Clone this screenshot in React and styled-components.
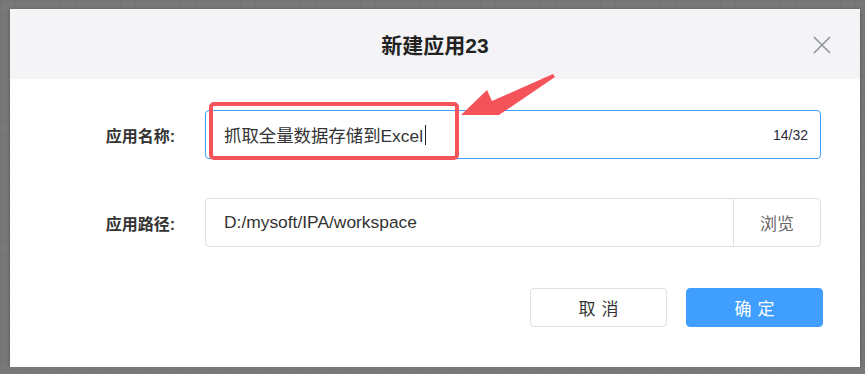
import React from 'react'
import styled, { createGlobalStyle } from 'styled-components'

const CJK = `"Liberation Sans", "Noto Sans CJK SC", sans-serif`

const GlobalStyle = createGlobalStyle`
  html, body {
    margin: 0;
    padding: 0;
    background-color: #787878;
    background-image:
      linear-gradient(rgba(0, 0, 0, 0.035) 1px, transparent 1px),
      linear-gradient(90deg, rgba(0, 0, 0, 0.035) 1px, transparent 1px);
    background-size: 15px 15px;
    font-family: ${CJK};
  }
`

const Page = styled.div`
  padding: 9px 0 0 10px;
`

const Dialog = styled.div`
  position: relative;
  width: 850px;
  height: 358px;
  background: #fff;
  box-shadow: 0 1px 3px rgba(0, 0, 0, 0.35);
  display: flex;
  flex-direction: column;
`

const Header = styled.div`
  height: 70px;
  background: #f4f4f6;
  display: flex;
  align-items: center;
  justify-content: center;
  position: relative;
`

const Title = styled.h2`
  margin: 0;
  font-size: 21px;
  font-weight: 700;
  color: #222;
  font-family: ${CJK};
`

const Close = styled.button`
  position: absolute;
  right: 29px;
  top: 27px;
  width: 18px;
  height: 18px;
  padding: 0;
  border: none;
  background: none;
  color: #8e9299;
  display: flex;
`

const Form = styled.div`
  padding: 31px 39px 0 0;
  display: flex;
  flex-direction: column;
  gap: 39px;
`

const Row = styled.div`
  display: grid;
  grid-template-columns: 195px 1fr;
  align-items: center;
`

const Label = styled.label`
  text-align: right;
  padding-right: 30px;
  font-size: 16px;
  font-weight: 700;
  color: #333;
`

const Field = styled.div`
  height: 49px;
  box-sizing: border-box;
  border: 1px solid ${p => (p.$focused ? '#409eff' : '#dcdfe6')};
  border-radius: 4px;
  display: flex;
  align-items: center;
  overflow: hidden;
`

const Value = styled.div`
  flex: 1;
  padding-left: 18px;
  font-size: 17.4px;
  color: #333;
  display: flex;
  align-items: center;
`

const Caret = styled.span`
  display: inline-block;
  width: 1px;
  height: 20px;
  background: #222;
  margin-left: 2px;
`

const Count = styled.span`
  font-size: 14px;
  color: #2a2a3a;
  padding-right: 12px;
`

const Append = styled.div`
  width: 86px;
  align-self: stretch;
  border-left: 1px solid #dcdfe6;
  display: flex;
  align-items: center;
  justify-content: center;
  font-size: 17px;
  color: #6a6a6a;
`

const Footer = styled.div`
  display: flex;
  justify-content: flex-end;
  gap: 19px;
  padding: 41px 37px 0 0;
`

const Button = styled.button`
  width: 137px;
  height: 39px;
  box-sizing: border-box;
  border-radius: 4px;
  border: 1px solid ${p => (p.$primary ? '#409eff' : '#dcdfe6')};
  background: ${p => (p.$primary ? '#409eff' : '#fff')};
  color: ${p => (p.$primary ? '#fff' : '#333')};
  font-family: ${CJK};
  font-size: 17px;
  letter-spacing: 6px;
  text-indent: 6px;
  cursor: pointer;
`

const Annotation = styled.svg`
  position: absolute;
  left: 0;
  top: 0;
  width: 850px;
  height: 358px;
  pointer-events: none;
`

const App = () => {
  return (
    <>
      <GlobalStyle />
      <Page>
        <Dialog>
          <Header>
            <Title>新建应用23</Title>
            <Close aria-label='close'>
              <svg width='18' height='18' viewBox='0 0 18 18'>
                <path d='M1 1 L17 17 M17 1 L1 17' stroke='currentColor' strokeWidth='1.6' fill='none' />
              </svg>
            </Close>
          </Header>
          <Form>
            <Row>
              <Label>应用名称:</Label>
              <Field $focused>
                <Value>
                  抓取全量数据存储到Excel<Caret />
                </Value>
                <Count>14/32</Count>
              </Field>
            </Row>
            <Row>
              <Label>应用路径:</Label>
              <Field>
                <Value>D:/mysoft/IPA/workspace</Value>
                <Append>浏览</Append>
              </Field>
            </Row>
          </Form>
          <Footer>
            <Button>取消</Button>
            <Button $primary>确定</Button>
          </Footer>
          <Annotation viewBox='0 0 850 358'>
            <rect x='201' y='95' width='246' height='54' rx='3' fill='none' stroke='#f5535a' strokeWidth='4' />
            <polygon points='451,106 477,81 482,92 543,65 545,68 489,106' fill='#f5535a' strokeLinejoin='round' />
          </Annotation>
        </Dialog>
      </Page>
    </>
  )
}

export default App
